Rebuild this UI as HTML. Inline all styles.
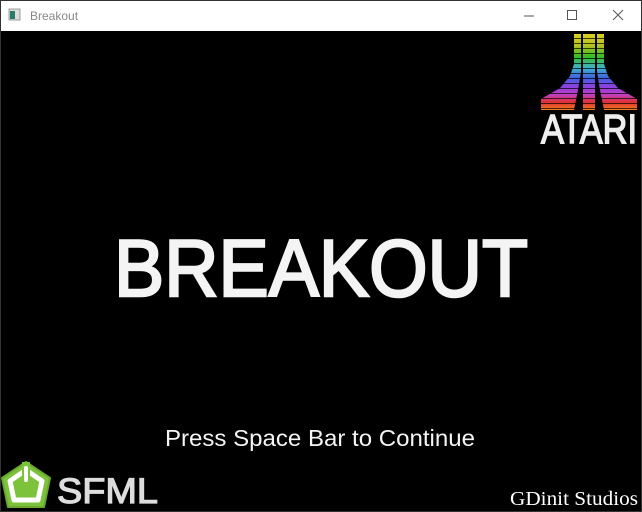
<!DOCTYPE html>
<html><head><meta charset="utf-8"><style>
html,body{margin:0;padding:0;width:642px;height:512px;overflow:hidden;background:#000}
</style></head><body>
<svg width="642" height="512" xmlns="http://www.w3.org/2000/svg">
<defs>
<linearGradient id="rb" x1="0" y1="34" x2="0" y2="110" gradientUnits="userSpaceOnUse">
<stop offset="0" stop-color="#d8d020"/>
<stop offset="0.15" stop-color="#b8c020"/>
<stop offset="0.3" stop-color="#30c020"/>
<stop offset="0.45" stop-color="#40b0d0"/>
<stop offset="0.58" stop-color="#4060e0"/>
<stop offset="0.7" stop-color="#9040e0"/>
<stop offset="0.8" stop-color="#c040c0"/>
<stop offset="0.9" stop-color="#e03030"/>
<stop offset="1" stop-color="#f08020"/>
</linearGradient>
<pattern id="ln" x="0" y="34" width="10" height="5" patternUnits="userSpaceOnUse">
<rect x="0" y="4" width="10" height="1" fill="#000" opacity="0.7"/>
</pattern>
</defs>
<rect x="0" y="0" width="642" height="31" fill="#fff"/>
<rect x="0.5" y="0.5" width="641" height="511" fill="none" stroke="#333"/>
<rect x="9" y="9" width="11" height="11" fill="#ddd" stroke="#888" stroke-width="0.8"/>
<rect x="10" y="11" width="5" height="8" fill="#2a7a6a"/>
<text x="30" y="20" font-family="Liberation Sans, sans-serif" font-size="12" fill="#888">Breakout</text>
<line x1="524" y1="16" x2="534" y2="16" stroke="#555"/>
<rect x="567.5" y="10.5" width="9" height="9" fill="none" stroke="#555"/>
<path d="M613 10 L623 20 M623 10 L613 20" stroke="#555"/>
<g>
<rect x="583" y="34" width="12" height="76" fill="url(#rb)"/>
<path d="M574 34 L581 34 L581 72 L578 90 L574 110 L541 110 L541 99 L560 88 L570 76 L574 64 Z" fill="url(#rb)"/>
<path d="M604 34 L597 34 L597 72 L600 90 L604 110 L637 110 L637 99 L618 88 L608 76 L604 64 Z" fill="url(#rb)"/>
<rect x="540" y="34" width="100" height="76" fill="url(#ln)"/>
</g>
<text x="541" y="143" font-family="Liberation Sans, sans-serif" font-size="41" fill="#eee" stroke="#eee" stroke-width="1.5" textLength="96" lengthAdjust="spacingAndGlyphs">ATARI</text>
<text x="114" y="296" font-family="Liberation Sans, sans-serif" font-size="81" fill="#f4f4f4" stroke="#f4f4f4" stroke-width="2.5" textLength="414" lengthAdjust="spacingAndGlyphs">BREAKOUT</text>
<text x="165" y="446" font-family="Liberation Sans, sans-serif" font-size="23" fill="#f4f4f4" textLength="310" lengthAdjust="spacingAndGlyphs">Press Space Bar to Continue</text>
<text x="510" y="505" font-family="Liberation Serif, serif" font-size="20" fill="#fff" textLength="128" lengthAdjust="spacingAndGlyphs">GDinit Studios</text>
<path d="M26 462 L50 478 L44 507 L8 507 L2 478 Z" fill="#7cc23a" stroke="#6aa830" stroke-width="2" stroke-linejoin="round"/>
<path d="M26 470 L42 481 L38 500 L14 500 L10 481 Z" fill="none" stroke="#fff" stroke-width="5" stroke-linejoin="round"/>
<rect x="22" y="462" width="8" height="18" fill="#7cc23a"/>
<rect x="24" y="466" width="4" height="16" rx="2" fill="#fff"/>
<text x="57" y="503" font-family="Liberation Sans, sans-serif" font-size="35" fill="#ddd" stroke="#ddd" stroke-width="1.2" textLength="101" lengthAdjust="spacingAndGlyphs">SFML</text>
</svg>
</body></html>
